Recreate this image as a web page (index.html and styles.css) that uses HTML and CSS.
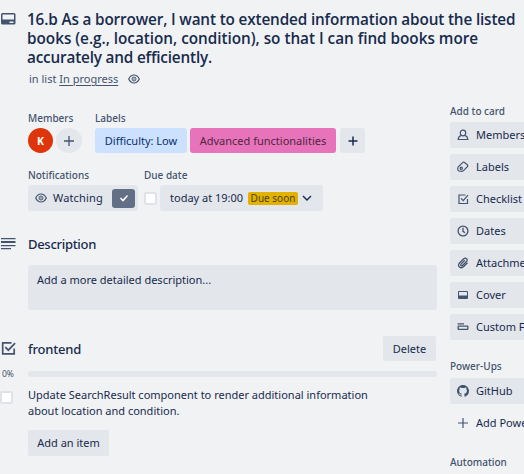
FILE: index.html
```
<!DOCTYPE html>
<html lang="en">
<head>
<meta charset="utf-8">
<title>Card details</title>
<link rel="stylesheet" href="styles.css">
</head>
<body>
<div class="card">
  <header class="header">
    <svg class="gutter-icon head-icon" viewBox="0 0 16 16"><path fill="currentColor" fill-rule="evenodd" d="M2.5 2h11.500A1.500 1.500 0 0 1 15.500 3.500v8.500a1.500 1.500 0 0 1-1.500 1.500h-11.500A1.500 1.500 0 0 1 1 12V3.500A1.500 1.500 0 0 1 2.500 2zM2.500 3.500v5h11.500v-5zM9.500 10.500v1.500h4v-1.500z"/></svg>
    <div>
      <h1 class="title"><span class="t1">16.b As a borrower, I want to extended information about the listed</span><br><span class="t2">books (e.g., location, condition), so that I can find books more</span><br><span class="t3">accurately and efficiently.</span></h1>
      <p class="in-list"><span>in list <a>In progress</a></span>
        <svg class="eye" viewBox="0 0 12 10"><g fill="none" stroke="currentColor"><path stroke-width="1.200" d="M.7 5C2 2.300 3.900 1 6 1s4 1.300 5.300 4C10 7.700 8.100 9 6 9S2 7.700.7 5z"/><circle cx="6" cy="5" r="2"/></g><circle cx="6" cy="5" r=".8" fill="currentColor"/></svg>
      </p>
    </div>
  </header>
  <div class="columns">
    <main class="main">
      <div class="meta">
        <section class="people">
          <h3>Members</h3>
          <div class="row members"><span class="avatar">K</span><span class="avatar add"><svg viewBox="0 0 12 12"><path d="M6 1v10M1 6h10"/></svg></span></div>
        </section>
        <section>
          <h3>Labels</h3>
          <div class="row labels"><span class="label blue">Difficulty: Low</span><span class="label pink">Advanced functionalities</span><span class="label plus"><svg viewBox="0 0 12 12"><path d="M6 1.500v9M1.500 6h9"/></svg></span></div>
        </section>
      </div>
      <div class="meta second">
        <section class="notifications">
          <h3>Notifications</h3>
          <div class="field watching">
            <svg class="eye" viewBox="0 0 12 10"><g fill="none" stroke="currentColor"><path stroke-width="1.200" d="M.7 5C2 2.300 3.900 1 6 1s4 1.300 5.300 4C10 7.700 8.100 9 6 9S2 7.700.7 5z"/><circle cx="6" cy="5" r="2"/></g><circle cx="6" cy="5" r=".8" fill="currentColor"/></svg>
            <span class="watch-text">Watching</span>
            <span class="tick"><svg viewBox="0 0 10 8"><path d="M1.500 4 4 6.500 8.500 1.500"/></svg></span>
          </div>
        </section>
        <section>
          <h3>Due date</h3>
          <div class="row due"><span class="check"></span><div class="field date"><span>today at 19:00</span><span class="soon">Due soon</span><svg class="chevron" viewBox="0 0 10 6"><path d="m1 1 4 4 4-4"/></svg></div></div>
        </section>
      </div>
      <section class="description">
        <div class="section-head"><svg class="gutter-icon" viewBox="0 0 16 16"><path fill="currentColor" d="M1 2h14.500v1.300H1zM1 5h14.500v2H1zM1 9h14.500v1.300H1zM1 12h10v1.300H1z"/></svg><h2 class="h-desc">Description</h2></div>
        <div class="box">Add a more detailed description...</div>
      </section>
      <section class="checklist">
        <div class="section-head"><svg class="gutter-icon" viewBox="0 0 16 16"><path fill="none" stroke="currentColor" stroke-width="1.700" d="M11.500 2.900H2.700v11h11.500V8.500M5.300 7.200l3 3 6.800-7"/></svg><h2 class="h-front">frontend</h2><span class="button delete">Delete</span></div>
        <div class="progress"><span class="percent">0%</span><span class="bar"></span></div>
        <div class="item"><span class="check"></span><p>Update SearchResult component to render additional information<br>about location and condition.</p></div>
        <span class="button add-item">Add an item</span>
      </section>
    </main>
    <aside class="side">
      <h3>Add to card</h3>
      <nav>
        <a class="action"><svg viewBox="0 0 12 12"><g fill="none" stroke="currentColor" stroke-width="1.200"><path d="M4.300 6.200C3.600 5.700 3.300 4.900 3.300 3.900 3.300 2.300 4.400 1.200 6 1.200s2.700 1.100 2.700 2.700c0 1-.3 1.800-1 2.300-.7.500-2.700.5-3.400 0z"/><path d="M4.300 6.500C2.300 7 1.200 8.300 1.200 10.500h9.600c0-2.200-1.100-3.500-3.100-4"/></g></svg><span>Members</span></a>
        <a class="action"><svg viewBox="0 0 12 12"><g fill="none" stroke="currentColor" stroke-width="1.200"><path d="M1.500 5.700 5.600 1.600Q6.300.9 7.200 1.200L10 3.500Q11.300 4.500 10.400 5.700L6.500 9.700Q5.800 10.400 4.900 10.300L1.900 10Q1 9.900.9 9L.8 7.200Q.8 6.400 1.500 5.700z"/><circle cx="4.300" cy="7.200" r="1.100"/></g></svg><span>Labels</span></a>
        <a class="action"><svg viewBox="0 0 12 12"><path fill="none" stroke="currentColor" stroke-width="1.200" d="M8.500 2H2v8.500h8.500V6M4 5.300l2.200 2.300L11 2.200"/></svg><span>Checklist</span></a>
        <a class="action"><svg viewBox="0 0 12 12"><g fill="none" stroke="currentColor" stroke-width="1.300"><circle cx="6" cy="6" r="4.900"/><path d="M6 2.800v3.500l2 1.500"/></g></svg><span>Dates</span></a>
        <a class="action"><svg viewBox="0 0 12 12"><path fill="none" stroke="currentColor" stroke-width="1.300" d="M10.500 5.700 6.700 9.500c-3 3-7-.6-4.200-3.500l4-4c2.200-2.200 5 .4 3 2.500L5.700 8.300C4.400 9.600 2.900 8.200 4.200 6.900l3.600-3.600"/></svg><span>Attachment</span></a>
        <a class="action"><svg viewBox="0 0 12 12"><path fill="currentColor" fill-rule="evenodd" d="M2 2h8q1 0 1 1v6q0 1-1 1H2q-1 0-1-1V3q0-1 1-1zM2 3v3.500h8V3z"/></svg><span>Cover</span></a>
        <a class="action"><svg viewBox="0 0 12 12"><path fill="currentColor" fill-rule="evenodd" d="M.5 2.300H7v1.200H.5zM1.500 4.500h9q1 0 1 1v2.500q0 1-1 1h-9q-1 0-1-1v-2.500q0-1 1-1zM1.800 5.800v1.900h8.400V5.800z"/></svg><span>Custom Fields</span></a>
      </nav>
      <h3 class="power">Power-Ups</h3>
      <nav>
        <a class="action"><svg viewBox="0 0 16 16"><path fill="currentColor" d="M8 0C3.580 0 0 3.580 0 8c0 3.540 2.290 6.530 5.470 7.590.4.070.55-.17.55-.38 0-.19-.01-.82-.01-1.490-2.010.37-2.530-.49-2.690-.94-.09-.23-.48-.94-.82-1.130-.28-.15-.68-.52-.01-.53.63-.01 1.080.58 1.230.82.72 1.210 1.870.87 2.330.66.070-.52.28-.87.51-1.070-1.780-.2-3.640-.89-3.640-3.950 0-.87.31-1.590.82-2.150-.08-.2-.36-1.020.08-2.120 0 0 .67-.21 2.200.82.640-.18 1.320-.27 2-.27s1.360.09 2 .27c1.530-1.040 2.200-.82 2.200-.82.44 1.100.16 1.920.08 2.120.51.56.82 1.270.82 2.150 0 3.070-1.870 3.750-3.650 3.950.29.25.54.73.54 1.480 0 1.070-.01 1.930-.01 2.200 0 .21.15.46.55.38A8.010 8.010 0 0 0 16 8c0-4.420-3.580-8-8-8z"/></svg><span>GitHub</span></a>
        <a class="action bare"><svg viewBox="0 0 12 12"><path fill="none" stroke="currentColor" stroke-width="1.200" d="M6 1v10M1 6h10"/></svg><span>Add Power-Ups</span></a>
      </nav>
      <h3 class="auto">Automation</h3>
    </aside>
  </div>
</div>
</body>
</html>
```
FILE: styles.css
```
* { box-sizing: border-box; }
html, body { margin: 0; height: 474px; overflow: hidden; background: #f1f2f4; }
body { color: #172b4d; font: 11px/16px "Noto Sans", "Open Sans", sans-serif; }
h1, h2, h3, p { margin: 0; font-weight: 500; }
p { font-weight: 400; }
svg { display: block; flex: none; color: #44546f; }
span, a { white-space: nowrap; }

.card { width: 524px; overflow: hidden; padding-top: 10px; }
.header { display: grid; grid-template-columns: 28px 1fr; height: 99px; }
.gutter-icon { width: 16px; height: 16px; margin-top: -2px; }
.head-icon { margin-top: 1px; }
.title { margin-left: -1px; font-size: 15.3px; line-height: 19px; font-weight: 600; font-family: "Open Sans", sans-serif; }
.t1 { letter-spacing: -0.15px; }
.t2 { letter-spacing: -0.02px; }
.t3 { letter-spacing: -0.18px; }
.in-list { display: flex; align-items: center; gap: 10px; padding: 4px 0 0 1px; color: #44546f; }
.in-list a { text-decoration: underline; text-underline-offset: 2px; }
.eye { width: 12px; height: 10px; }

.columns { display: grid; grid-template-columns: 437px 74px; column-gap: 13px; }
h3 { height: 19px; font-size: 10px; line-height: 18px; color: #44546f; white-space: nowrap; }
.meta { display: flex; padding-left: 28px; height: 57px; }
.people { width: 67px; }
.row { display: flex; align-items: center; }
.members { gap: 3px; }
.avatar { display: flex; align-items: center; justify-content: center; width: 25px; height: 25px; border-radius: 50%; background: #de350b; color: #fff; font-size: 10.5px; font-weight: 700; }
.avatar.add { width: 26px; background: #e3e6ea; }
.avatar svg, .plus svg { width: 12px; height: 12px; fill: none; stroke: currentColor; stroke-width: 1.3; }
.labels { gap: 3px; }
.label { height: 25px; border-radius: 3px; line-height: 25px; text-align: center; }
.blue { width: 92px; background: #cce0ff; color: #09326c; }
.pink { width: 146px; background: #e774bb; color: #50253f; }
.plus { display: flex; align-items: center; justify-content: center; width: 25px; margin-left: 1px; background: #e3e6ea; }
.plus svg { color: #172b4d; stroke-width: 1.5; }
.second { gap: 6px; height: 66px; }
.notifications { width: 110px; }
.field { display: flex; align-items: center; height: 26px; border-radius: 3px; background: #e3e6ea; }
.watching { padding: 0 3px 0 7px; }
.watch-text { margin-left: 6px; letter-spacing: 0.15px; }
.tick { display: flex; align-items: center; justify-content: center; width: 23px; height: 19px; margin-left: auto; border-radius: 3px; background: #626f86; }
.tick svg { width: 10px; height: 8px; fill: none; stroke: #fff; stroke-width: 1.6; }
.check { flex: none; width: 13px; height: 13px; border: 2px solid #dfe2e7; border-radius: 2px; background: #fff; }
.due { gap: 3px; }
.date { width: 163px; padding: 0 11px 0 10px; }
.soon { width: 50px; height: 13px; margin-left: auto; border-radius: 2px; background: #e2b203; color: #533f04; font-size: 10px; line-height: 13px; text-align: center; }
.chevron { width: 10px; height: 6px; margin-left: 4px; fill: none; stroke: #172b4d; stroke-width: 1.4; }

.section-head { display: flex; align-items: center; height: 25px; }
h2 { margin-left: 12px; font-size: 13px; line-height: 20px; white-space: nowrap; }
.h-desc { margin-top: -2px; letter-spacing: -0.3px; }
.h-front { letter-spacing: -0.2px; }
.box { height: 45px; margin: 8px 0 26px 28px; padding: 7px 9px; border-radius: 3px; background: #e3e6ea; }
.button { display: flex; align-items: center; justify-content: center; height: 25px; border-radius: 2px; background: #e3e6ea; }
.delete { width: 53px; margin-left: auto; margin-right: 1px; }
.progress { display: flex; align-items: center; height: 26px; }
.percent { width: 28px; padding-left: 2px; font-size: 8.5px; color: #44546f; }
.bar { flex: 1; height: 6px; border-radius: 3px; background: #e3e6ea; }
.item { display: flex; gap: 15px; height: 43px; }
.item .check { margin-top: 4px; }
.add-item { width: 81px; height: 26px; margin-left: 28px; }

.side { margin-top: -7px; min-width: 0; }
.side h3 { height: 19px; }
nav { display: grid; grid-template-columns: 100%; gap: 6px; padding-top: 1px; }
.action { display: flex; align-items: center; gap: 7px; height: 26px; padding-left: 7px; border-radius: 3px 0 0 3px; background: #e3e6ea; overflow: hidden; }
.action svg { width: 12px; height: 12px; }
.action.bare { background: none; }
.side .power { margin-top: 17px; height: 20px; }
.side .auto { margin-top: 17px; }
```
